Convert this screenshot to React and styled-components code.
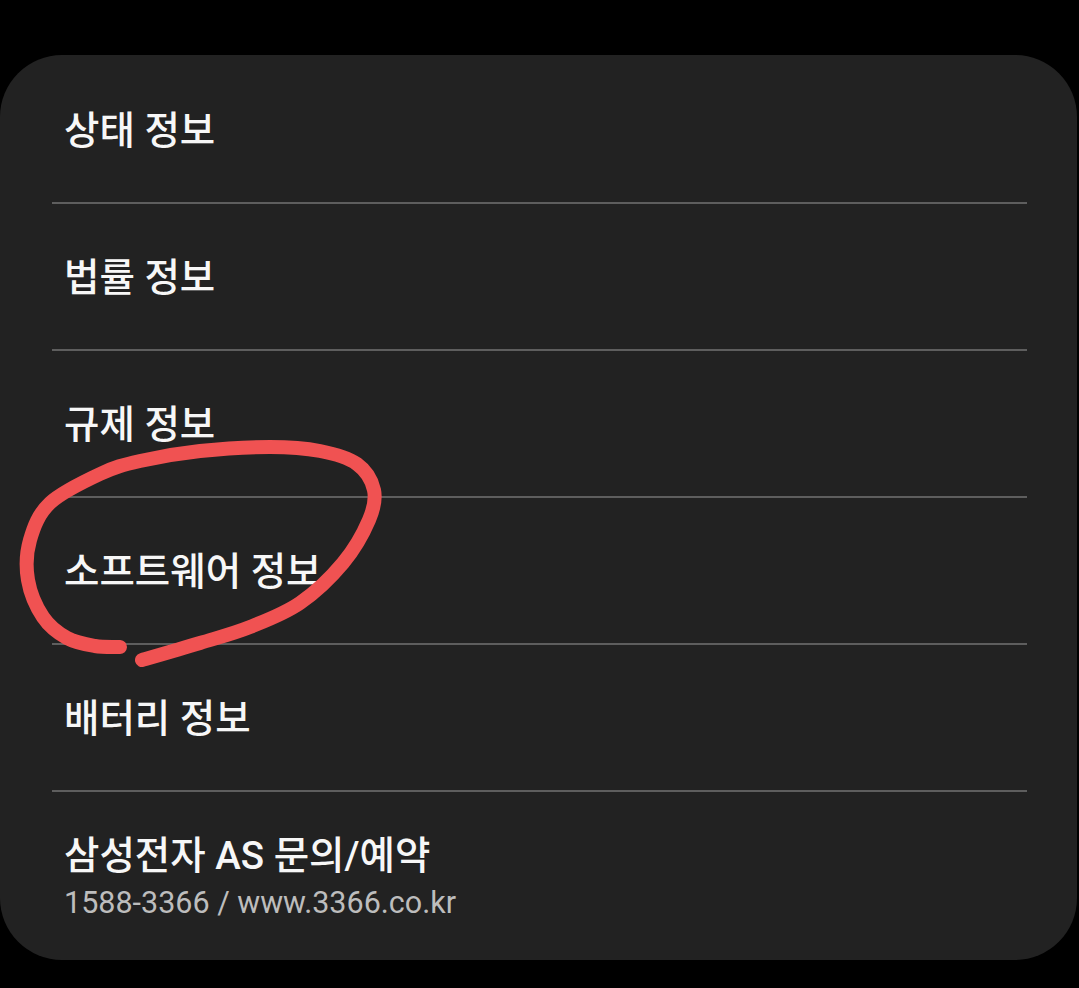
import React from "react";
import styled, { createGlobalStyle } from "styled-components";

const Global = createGlobalStyle`
  html, body { margin: 0; padding: 0; background: #000; }
  body { font-family: Roboto, "Noto Sans CJK KR", sans-serif; }
  * { box-sizing: border-box; }
`;

const Page = styled.div`
  position: relative;
  width: 1079px;
  height: 988px;
  background: #000;
  padding-top: 55px;
  overflow: hidden;
`;

const Card = styled.div`
  width: 1077px;
  height: 905px;
  background: #222222;
  border-radius: 62px;
  padding-top: 2px;
  display: flex;
  flex-direction: column;
`;

const Row = styled.div`
  height: ${(p) => (p.$tall ? "166px" : "145px")};
  display: flex;
  flex-direction: column;
  justify-content: center;
  padding-left: 64px;
  padding-top: ${(p) => (p.$tall ? "4px" : "2px")};
`;

const Title = styled.div`
  font-family: Roboto, "Noto Sans CJK KR", sans-serif;
  font-size: 38.5px;
  font-weight: 500;
  color: #f7f7f7;
  line-height: 50px;
`;

const Sub = styled.div`
  font-family: Roboto, "Noto Sans CJK KR", sans-serif;
  font-size: 30.5px;
  font-weight: 400;
  color: #bdbdbd;
  line-height: 40px;
  margin-top: 2px;
`;

const Divider = styled.div`
  height: 2px;
  margin: 0 50px 0 52px;
  background: #5e5e5e;
  flex: none;
`;

const Annotation = styled.svg`
  position: absolute;
  left: 0;
  top: 0;
  pointer-events: none;
`;

const pts = [
  [142, 660], [200, 643], [250, 627], [300, 603], [343, 563], [369, 520],
  [374, 490], [357, 464], [320, 451], [270, 447], [200, 451], [140, 461],
  [100, 474], [50, 503], [30, 540], [28, 580], [43, 617], [67, 638],
  [95, 646], [120, 647],
];

function catmull(points) {
  let d = `M${points[0][0]},${points[0][1]}`;
  for (let i = 0; i < points.length - 1; i++) {
    const p0 = points[i - 1] || points[i];
    const p1 = points[i];
    const p2 = points[i + 1];
    const p3 = points[i + 2] || p2;
    const c1 = [p1[0] + (p2[0] - p0[0]) / 6, p1[1] + (p2[1] - p0[1]) / 6];
    const c2 = [p2[0] - (p3[0] - p1[0]) / 6, p2[1] - (p3[1] - p1[1]) / 6];
    d += ` C${c1[0].toFixed(1)},${c1[1].toFixed(1)} ${c2[0].toFixed(1)},${c2[1].toFixed(1)} ${p2[0]},${p2[1]}`;
  }
  return d;
}

const items = ["상태 정보", "법률 정보", "규제 정보", "소프트웨어 정보", "배터리 정보"];

export default function App() {
  return (
    <>
      <Global />
      <Page>
        <Card>
          {items.map((t) => (
            <React.Fragment key={t}>
              <Row>
                <Title>{t}</Title>
              </Row>
              <Divider />
            </React.Fragment>
          ))}
          <Row $tall>
            <Title>삼성전자 AS 문의/예약</Title>
            <Sub>1588-3366 / www.3366.co.kr</Sub>
          </Row>
        </Card>
        <Annotation width="1079" height="988" viewBox="0 0 1079 988">
          <path
            d={catmull(pts)}
            fill="none"
            stroke="#f05252"
            strokeWidth="14"
            strokeLinecap="round"
            strokeLinejoin="round"
          />
        </Annotation>
      </Page>
    </>
  );
}
